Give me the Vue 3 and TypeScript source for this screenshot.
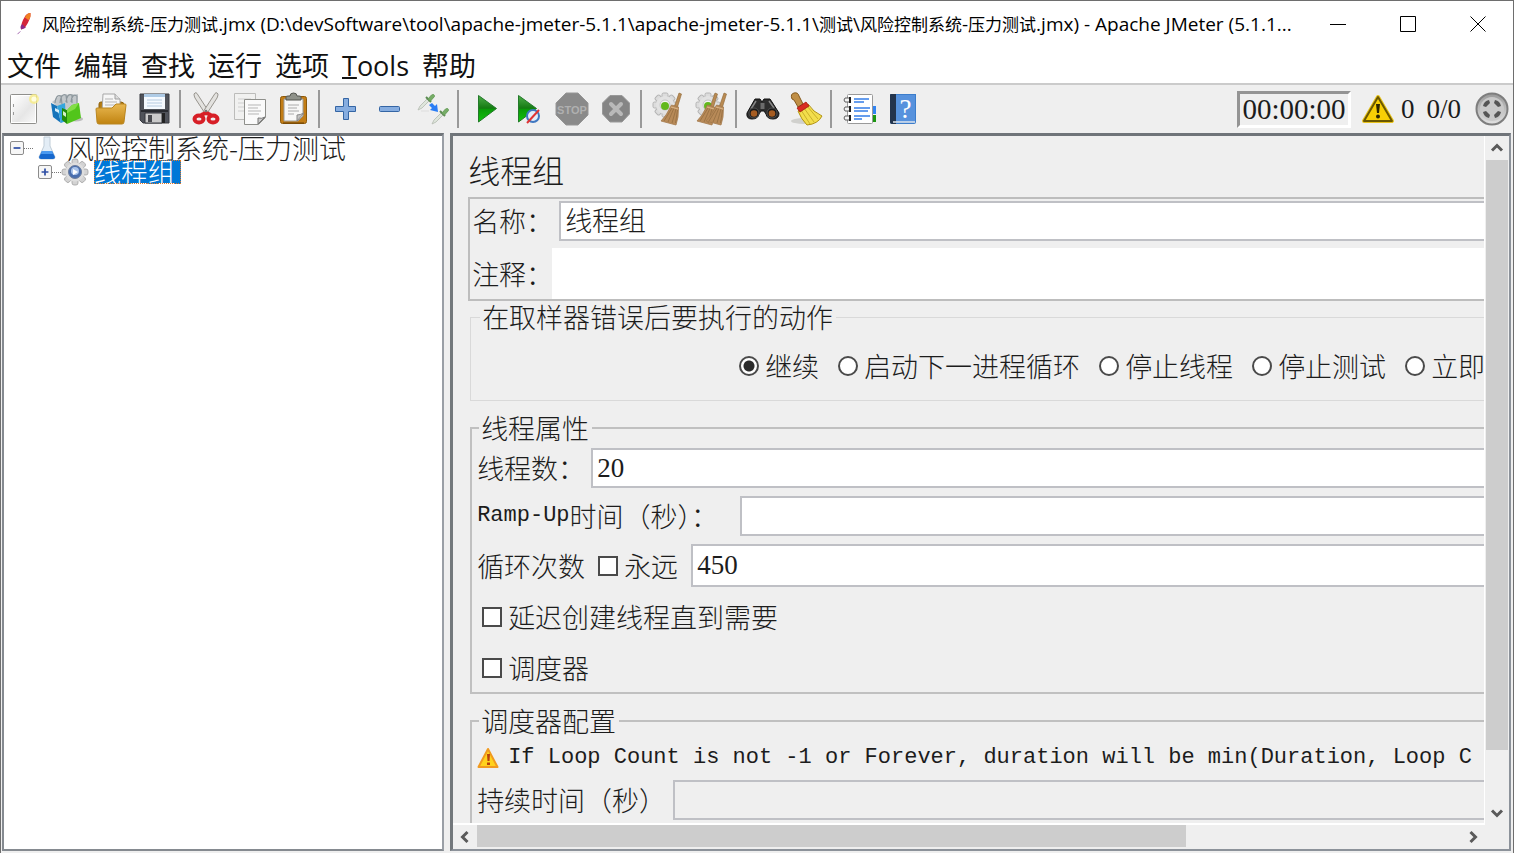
<script setup lang="ts">
import { ref } from 'vue'

interface Tool {
  label: string
  art: string
}

const title =
  '风险控制系统-压力测试.jmx (D:\\devSoftware\\tool\\apache-jmeter-5.1.1\\apache-jmeter-5.1.1\\测试\\风险控制系统-压力测试.jmx) - Apache JMeter (5.1.1...'
const titleRuns = title.split(/([\u4e00-\u9fff]+)/).filter(Boolean)
const isHan = (s: string): boolean => /^[\u4e00-\u9fff]/.test(s)

const menus: string[] = ['文件', '编辑', '查找', '运行', '选项', 'Tools', '帮助']

const gear = (cx: number, cy: number): string => {
  const teeth = [0, 45, 90, 135, 180, 225, 270, 315]
    .map((a) => `<rect x="${cx - 3}" y="${cy - 12}" width="6" height="6" rx="1.5" transform="rotate(${a} ${cx} ${cy})"/>`)
    .join('')
  return `<g fill="#dcdcdc" stroke="#b4b4b4" stroke-width="1">${teeth}</g><circle cx="${cx}" cy="${cy}" r="9" fill="#e2e2e2"/><circle cx="${cx}" cy="${cy}" r="5" fill="#f5f5f5" stroke="#c2c2c2"/><circle cx="${cx}" cy="${cy + 1}" r="4" fill="#62b81c"/>`
}

const whisk = (dx: number): string =>
  `<g transform="translate(${dx} 0)"><path d="M28 0l2.500 1-4 13-3-1z" fill="#b98a52" stroke="#8c6434" stroke-width=".6"/><path d="M20.500 12l7 2-.5 10-2 8-15-4 5-6z" fill="#b88a58" stroke="#a37a4c" stroke-width=".8"/><path d="M21 15l-8 13M23 15l-6 14M25 16l-4 14M26.500 17l-2 13" stroke="#8f6a3e" stroke-width=".7" fill="none"/><path d="M20 14l7 2" stroke="#d9b487" stroke-width="1.200"/></g>`

const pipette = (x: number, y: number): string =>
  `<g transform="translate(${x} ${y})"><path d="M0 16l2-4 7-7 2 2-7 7z" fill="#dfe6dc" stroke="#b9c0b6" stroke-width=".9"/><path d="M8 3l5 5" stroke="#5a8a50" stroke-width="2"/><path d="M10 5l3.500-4q3-1.500 3 1.500L12.500 7z" fill="#76ad66" stroke="#6a9f5c"/></g>`

const green = (id: string): string =>
  `<defs><linearGradient id="${id}" x1="0" y1="0" x2="0" y2="1"><stop offset="0" stop-color="#4fae4a"/><stop offset=".48" stop-color="#157a12"/><stop offset=".52" stop-color="#0a9a08"/><stop offset="1" stop-color="#12c40c"/></linearGradient></defs>`

const groups: Tool[][] = [
  [
    {
      label: '新建',
      art: `<defs><linearGradient id="pg" x1="0" y1="0" x2="1" y2="1"><stop offset="0" stop-color="#fff"/><stop offset=".6" stop-color="#e6e6e6"/><stop offset="1" stop-color="#f8f8f8"/></linearGradient></defs><rect x="3.500" y="1.500" width="26" height="29" rx="1" fill="#fff" stroke="#8f8f8c"/><rect x="5" y="3" width="23" height="26" fill="url(#pg)"/><path d="M6.500 11v3M6.500 19v3" stroke="#999"/><circle cx="27" cy="6" r="5" fill="#f7ec85" opacity=".8"/><circle cx="27" cy="6" r="2.600" fill="#fffde0"/>`,
    },
    {
      label: '模板',
      art: `<ellipse cx="25" cy="26" rx="7" ry="2.500" fill="#bcbcbc"/><path d="M1 9l9-7 17-1-1 12-15 5z" fill="#c3c8cb"/><g fill="none" stroke="#8d979d" stroke-width="1.200"><path d="M4 10q1-9 6-7l1 8M9 10q1-10 6-8l1 8M15 9q1-9 6-7l0 8M20 9q1-9 6-6l0 7"/></g><path d="M0 10l6 3 4 17-8-6z" fill="#1674ba"/><path d="M6 13l8-3 1 18-5 2z" fill="#34a5dd"/><path d="M4 15l4 2v3l-4-2z" fill="#d6edf8"/><path d="M11 15l5 2v14l-5-4z" fill="#228b0a"/><path d="M16 17l5-5 7-2 2 15-14 6z" fill="#52c51b"/><path d="M21 12l7-2-4 6-8 4v-3z" fill="#83de46"/><path d="M12 18l3 2v4l-3-2z" fill="#d5f1c7"/>`,
    },
    {
      label: '打开',
      art: `<defs><linearGradient id="fd" x1="0" y1="0" x2="0" y2="1"><stop offset="0" stop-color="#e9b851"/><stop offset="1" stop-color="#c08310"/></linearGradient></defs><path d="M4 11q0-2 2-2h20q3 0 3 3v14H4z" fill="#b57c12" stroke="#8d600b"/><path d="M8 1h12l5 5v13H7z" fill="#f6f6f6" stroke="#a7a7a7"/><path d="M20 1v5h5" fill="#ddd" stroke="#a0a0a0"/><path d="M10 6h8M10 9h12M10 12h12" stroke="#b5b5b5"/><path d="M1 16q0-1 1-1h15l4-4h9q1 0 1 1l-2 17q0 2-2 2H4q-2 0-2-2z" fill="url(#fd)" stroke="#b98620"/>`,
    },
    {
      label: '保存',
      art: `<path d="M1 1h29v29H4l-3-3z" fill="#50535a" stroke="#383a40"/><rect x="5" y="1" width="21" height="15" fill="#f5faff"/><rect x="5" y="1" width="21" height="3" fill="#aecbe6"/><path d="M8 7h15M8 10h15M8 13h15" stroke="#b6cbe0"/><path d="M2 18h27" stroke="#292b30" stroke-width="2"/><path d="M6 20h17v10H6z" fill="#cacaca" stroke="#33353a"/><rect x="9" y="22" width="4" height="7" fill="#48494e"/><path d="M23 20h3v10h-3z" fill="#222"/>`,
    },
  ],
  [
    {
      label: '剪切',
      art: `<g stroke="#98958f" fill="#e3e2df"><path d="M4 1q2-3 4 1l11 17-3 3L5 5q-1-2-1-4z"/><path d="M28 1q-2-3-4 1L13 19l3 3L27 5q1-2 1-4z"/></g><g fill="none" stroke="#d71f27" stroke-width="4"><ellipse cx="9" cy="26" rx="4.500" ry="3.500"/><ellipse cx="23" cy="26" rx="4.500" ry="3.500"/><path d="M11 22l5-2 5 2"/></g><circle cx="16" cy="18" r="1.300" fill="#777"/>`,
    },
    {
      label: '复制',
      art: `<path d="M.5.500h21v26H.5z" fill="#f1f1f0" stroke="#bcbcba"/><path d="M4 6h13M4 10h12M4 14h8M4 18h8" stroke="#cfcfcf"/><path d="M10.500 6.500h21v18l-7 7h-14z" fill="#fafafa" stroke="#8e8f8b"/><path d="M31 24l-7 7v-6q4 1 7-1z" fill="#ccc" stroke="#777"/><path d="M14 12h13M14 15h10M14 18h13M14 21h11" stroke="#b5b5b5"/>`,
    },
    {
      label: '粘贴',
      art: `<rect x="2.500" y="3.500" width="26" height="27" rx="2" fill="#c27d16" stroke="#8c5809"/><path d="M5 30h21" stroke="#6c4304"/><path d="M6 6h19v17l-5 5H6z" fill="#f7f7f6" stroke="#9b9b98"/><path d="M26 20l-7 8v-6q3 0 7-2z" fill="#c5c5c3" stroke="#888"/><path d="M10 12h11M10 15h9M10 18h11M10 21h6" stroke="#aaa"/><path d="M8 7V4q0-1 2-1h2q0-3 3.500-3T19 3h2q2 0 2 1v3z" fill="#8f928a" stroke="#555751"/>`,
    },
  ],
  [
    {
      label: '全部展开',
      art: `<path d="M14.500 5.500h5v8h7v5h-7v8h-5v-8h-8v-5h8z" fill="#86ade0" stroke="#3465a4" stroke-linejoin="round"/>`,
    },
    {
      label: '全部折叠',
      art: `<rect x="6.500" y="13.500" width="20" height="5" rx="1" fill="#86ade0" stroke="#3465a4"/>`,
    },
    {
      label: '切换',
      art: `${pipette(1, 1)}${pipette(15, 15)}<path d="M12 12l3 3-2 2 8 2-1-8-2 2-3-3z" fill="#2a7df5"/><path d="M4 18h8" stroke="#ddd"/>`,
    },
  ],
  [
    {
      label: '启动',
      art: `${green('ga')}<path d="M10.500 2.500l18 13-18 13.500z" fill="url(#ga)" stroke="#23792a" stroke-linejoin="round"/>`,
    },
    {
      label: '不停顿开始',
      art: `${green('gb')}<path d="M6.500 2.500l18 13-18 13.500z" fill="url(#gb)" stroke="#23792a" stroke-linejoin="round"/><circle cx="21" cy="23" r="6" fill="#e3ecf8" stroke="#3f77c1" stroke-width="2"/><path d="M15 30L27 17" stroke="#e03434" stroke-width="2"/>`,
    },
    {
      label: '停止',
      art: `<path d="M10 0h12l10 10v12L22 32H10L0 22V10z" fill="#8a8a8a" stroke="#969696"/><text x="16" y="21" text-anchor="middle" font-family="Liberation Sans, sans-serif" font-weight="700" font-size="11" fill="#b0b0b0">STOP</text>`,
    },
    {
      label: '关闭',
      art: `<path d="M10 2.500h12l7.500 7.500v11L22 29H10l-7.500-8V10z" fill="#858585" stroke="#999"/><path d="M11 11l10 10M21 11L11 21" stroke="#b9b9b9" stroke-width="4" stroke-linecap="round"/>`,
    },
  ],
  [
    { label: '清除', art: `${gear(14, 12)}${whisk(0)}` },
    { label: '清除全部', art: `${gear(13, 12)}${whisk(-8)}${whisk(1)}` },
  ],
  [
    {
      label: '查找',
      art: `<path d="M9 6h5l2 3 2-3h6l2 3 7 11q0 6-6 6t-7-5l-2-3h-3l-2 3q-1 5-7 5t-5-6z" fill="#2d2d2d" stroke="#111"/><path d="M10 8l-5 8M23 8l5 7" stroke="#888" stroke-width="1.500"/><circle cx="8" cy="20" r="5" fill="#191919" stroke="#505050"/><circle cx="26" cy="20" r="5" fill="#191919" stroke="#505050"/><circle cx="8" cy="20.500" r="3.300" fill="#a75d22"/><circle cx="26" cy="20.500" r="3.300" fill="#a75d22"/><rect x="14.500" y="10" width="4" height="6" fill="#6b6b6b"/>`,
    },
    {
      label: '重置搜索',
      art: `<ellipse cx="14" cy="28" rx="13" ry="3" fill="#d0d0cd"/><path d="M2 6Q0 1 4 0q4-1 5 3l4 8-5 3-4-7z" fill="#c08f46" stroke="#855a1d"/><path d="M18 11q5 8 14 12-4 8-15 9-6-6-9-14z" fill="#f3de4c" stroke="#b29311"/><path d="M11 17l9 14M14 15l10 14M17 13l11 13" stroke="#cbb02a" fill="none"/><path d="M7 15l9-6 3 4-9 6z" fill="#d92b20" stroke="#a3170f" stroke-width=".8"/>`,
    },
  ],
  [
    {
      label: '函数助手',
      art: `<path d="M29 13h6v8h-6z" fill="#3284f2"/><path d="M29 22h6v7h-6z" fill="#1b9610"/><rect x="6.500" y="1.500" width="25" height="29" rx="1" fill="#fff" stroke="#9a9a9a"/><path d="M13 6h15M13 9h10M13 15h16M13 18h14M13 23h16M13 26h8" stroke="#347ee8" stroke-width="1.400"/><g fill="#f3f3f3" stroke="#606060" stroke-width="1"><path d="M9 5H4q-2 2 0 4h5zM9 14H4q-2 2 0 4h5zM9 23H4q-2 2 0 4h5z"/></g><path d="M9 4v6M9 13v6M9 22v6" stroke="#222" stroke-width="2"/>`,
    },
    {
      label: '帮助',
      art: `<path d="M5 2q0-1 1-1h25v28q0 2-2 2H7q-2 0-2-2z" fill="#3c7dcb"/><path d="M5 2q0-1 1-1h5v30H7q-2 0-2-2z" fill="#23344d"/><rect x="11" y="2" width="19" height="27" fill="#5792dd"/><path d="M8 29h22" stroke="#dfe6ee" stroke-width="1.500"/><text x="20.500" y="25" text-anchor="middle" font-family="Liberation Serif, serif" font-size="27" fill="#fff">?</text>`,
    },
  ],
]

const onError = ['继续', '启动下一进程循环', '停止线程', '停止测试', '立即停止测试']
const action = ref('继续')
const name = ref('线程组')
const comment = ref('')
const threads = ref('20')
const ramp = ref('')
const loops = ref('450')
const forever = ref(false)
const delayed = ref(false)
const scheduler = ref(false)
const duration = ref('')
</script>

<template>
  <div class="window">
    <header class="titlebar">
      <svg class="feather" viewBox="0 0 16 26" aria-hidden="true">
        <path d="M15 1Q16 7 9 17L5 19Q4 13 9 5 11 1 15 1z" fill="#d4253a" />
        <path d="M15 1Q16 5 13 9L9 6Q11 1 15 1z" fill="#f08222" />
        <path d="M5 19q-2-3 1-6l4 4z" fill="#8d2a88" />
        <path d="M4 21l-3 3" stroke="#9b5aa8" fill="none" />
      </svg>
      <h1><span v-for="(run, i) in titleRuns" :key="i" :class="{ han: isHan(run) }">{{ run }}</span></h1>
      <div class="controls">
        <button type="button" aria-label="最小化"><svg viewBox="0 0 16 16"><path d="M0 8.500h16" /></svg></button>
        <button type="button" aria-label="最大化"><svg viewBox="0 0 16 16"><path d="M.5.500h15v15H.5z" /></svg></button>
        <button type="button" aria-label="关闭"><svg viewBox="0 0 16 16"><path d="M.5.500l15 15M15.500.500l-15 15" /></svg></button>
      </div>
    </header>

    <nav class="menubar">
      <button v-for="m in menus" :key="m" type="button">
        <span v-if="m === 'Tools'" class="latin-menu"><u>T</u>ools</span>
        <template v-else>{{ m }}</template>
      </button>
    </nav>

    <div class="toolbar">
      <div v-for="(g, i) in groups" :key="i" class="group">
        <button v-for="t in g" :key="t.label" type="button" :aria-label="t.label">
          <svg viewBox="0 0 32 32" aria-hidden="true" v-html="t.art"></svg>
        </button>
      </div>
      <div class="status">
        <output class="timer">00:00:00</output>
        <button type="button" class="warn" aria-label="日志">
          <svg viewBox="0 0 32 28">
            <path d="M16 2L30 26H2z" fill="#f6cc00" stroke="#e8c31c" stroke-width="4" stroke-linejoin="round" />
            <path d="M16 2L30 26H2z" fill="#f8cf05" stroke="#6b5800" stroke-width="2" stroke-linejoin="round" />
            <path d="M14 9h4l-1 9h-2z" fill="#2d2600" />
            <circle cx="16" cy="21.500" r="2" fill="#2d2600" />
          </svg>
        </button>
        <span class="errors">0</span>
        <span>0/0</span>
        <svg class="remote" viewBox="0 0 34 34" aria-hidden="true">
          <defs>
            <linearGradient id="ball" x1="0" y1="0" x2="0" y2="1">
              <stop offset="0" stop-color="#989898" /><stop offset="1" stop-color="#e2e2e2" />
            </linearGradient>
          </defs>
          <circle cx="17" cy="17" r="15.500" fill="url(#ball)" stroke="#7e7e7e" stroke-width="2" />
          <circle cx="17" cy="17" r="12" fill="#c9c9c9" />
          <g fill="#555">
            <path d="M8 14q1-5 6-6l1 3-4 4z" /><path d="M26 14q-1-5-6-6l-1 3 4 4z" />
            <path d="M8 20q1 5 6 6l1-3-4-4z" /><path d="M26 20q-1 5-6 6l-1-3 4-4z" />
          </g>
        </svg>
      </div>
    </div>

    <main class="split">
      <aside class="tree">
        <div class="node">
          <button type="button" class="toggle" aria-label="折叠"><svg viewBox="0 0 14 14"><path d="M3 7h8" /></svg></button>
          <i class="dots"></i>
          <svg class="flask" viewBox="0 0 18 24" aria-hidden="true">
            <path d="M6 1h6v9l5 11q0 2-2 2H3q-2 0-2-2L6 10z" fill="#e3edf6" stroke="#c0cdd8" />
            <path d="M4 15h10l3 6q0 2-2 2H3q-2 0-2-2z" fill="#1768cd" />
            <path d="M4 15h10l1 3H3z" fill="#4b9af0" />
          </svg>
          <span>风险控制系统-压力测试</span>
        </div>
        <div class="node child">
          <button type="button" class="toggle" aria-label="展开"><svg viewBox="0 0 14 14"><path d="M3 7h8M7 3v8" /></svg></button>
          <i class="dots"></i>
          <svg class="cog" viewBox="0 0 28 24" aria-hidden="true">
            <g fill="#d3d3d3" stroke="#a2a2a2" stroke-width=".8">
              <rect v-for="a in [0, 45, 90, 135, 180, 225, 270, 315]" :key="a" x="11" y="-1" width="6" height="7" rx="2" :transform="`rotate(${a} 14 12)`" />
            </g>
            <circle cx="14" cy="12" r="9.500" fill="#dedede" />
            <circle cx="14" cy="12" r="6.500" fill="#4a6fae" stroke="#6e7f9d" />
            <circle cx="14" cy="11" r="4" fill="#aac4ea" />
            <path d="M12 9l5 3-5 3z" fill="#fff" />
          </svg>
          <span class="selected">线程组</span>
        </div>
      </aside>

      <section class="pane">
        <div class="viewport">
          <h2>线程组</h2>
          <div class="naming">
            <div class="row name-row">
              <label for="name">名称：</label>
              <input id="name" v-model="name" class="cjk" type="text" />
            </div>
            <div class="row comment-row">
              <label for="comment">注释：</label>
              <input id="comment" v-model="comment" class="cjk" type="text" />
            </div>
          </div>

          <fieldset class="soft">
            <legend>在取样器错误后要执行的动作</legend>
            <div class="radios">
              <label v-for="o in onError" :key="o"><input v-model="action" type="radio" name="on-error" :value="o" />{{ o }}</label>
            </div>
          </fieldset>

          <fieldset class="props">
            <legend>线程属性</legend>
            <div class="row">
              <label for="threads">线程数：</label>
              <input id="threads" v-model="threads" type="text" />
            </div>
            <div class="row ramp">
              <label for="ramp"><span class="mono">Ramp-Up</span>时间（秒）：</label>
              <input id="ramp" v-model="ramp" type="text" />
            </div>
            <div class="row loop">
              <label for="loops">循环次数</label>
              <label class="check"><input v-model="forever" type="checkbox" />永远</label>
              <input id="loops" v-model="loops" type="text" />
            </div>
            <label class="check line"><input v-model="delayed" type="checkbox" />延迟创建线程直到需要</label>
            <label class="check line"><input v-model="scheduler" type="checkbox" />调度器</label>
          </fieldset>

          <fieldset class="config">
            <legend>调度器配置</legend>
            <p>
              <svg viewBox="0 0 22 22" aria-hidden="true">
                <path d="M11 2l9.500 18h-19z" fill="#ffd21d" stroke="#f19a1f" stroke-width="2" stroke-linejoin="round" />
                <path d="M10 7h3l-.5 7h-2zM10 15.500h3v2.500h-3z" fill="#b8400c" />
              </svg>
              <span class="mono">If Loop Count is not -1 or Forever, duration will be min(Duration, Loop C</span>
            </p>
            <div class="row">
              <label for="duration">持续时间（秒）</label>
              <input id="duration" v-model="duration" type="text" disabled />
            </div>
          </fieldset>
        </div>

        <div class="scroll vertical">
          <button type="button" aria-label="向上"><svg viewBox="0 0 12 12"><path d="M1 8.500l5-5 5 5" /></svg></button>
          <div class="track"><div class="thumb"></div></div>
          <button type="button" aria-label="向下"><svg viewBox="0 0 12 12"><path d="M1 3.500l5 5 5-5" /></svg></button>
        </div>
        <div class="scroll horizontal">
          <button type="button" aria-label="向左"><svg viewBox="0 0 12 12"><path d="M8.500 1l-5 5 5 5" /></svg></button>
          <div class="track"><div class="thumb"></div></div>
          <button type="button" aria-label="向右"><svg viewBox="0 0 12 12"><path d="M3.500 1l5 5-5 5" /></svg></button>
        </div>
      </section>
    </main>
  </div>
</template>

<style>
body {
  margin: 0;
  background: #efefef;
}
</style>

<style scoped>
* {
  box-sizing: border-box;
}
.window {
  display: flex;
  flex-direction: column;
  height: 100vh;
  overflow: hidden;
  border: 1px solid #6e6e6e;
  border-bottom: 0;
  background: #efefef;
  color: #1c1c1c;
  font-family: 'Noto Sans CJK SC', sans-serif;
  font-size: 27px;
  font-weight: 300;
  line-height: 32px;
}
button {
  padding: 0;
  border: 0;
  background: none;
  color: inherit;
  font: inherit;
}
svg {
  display: block;
  flex: none;
  overflow: visible;
}
.titlebar {
  display: flex;
  flex: none;
  align-items: center;
  height: 46px;
  padding-left: 15px;
  background: #fff;
  color: #000;
}
.feather {
  width: 16px;
  height: 24px;
}
h1 {
  flex: 1;
  margin: 0 0 0 10px;
  overflow: hidden;
  font-family: 'Open Sans', 'Noto Sans CJK SC', sans-serif;
  font-size: 19px;
  font-weight: 400;
  line-height: 28px;
  white-space: nowrap;
}
.han {
  font-size: 17px;
}
.controls {
  display: flex;
}
.controls button {
  display: grid;
  place-items: center;
  width: 70px;
  height: 44px;
}
.controls svg {
  width: 16px;
  height: 16px;
  fill: none;
  stroke: #000;
}
.menubar {
  display: flex;
  flex: none;
  gap: 13px;
  height: 38px;
  padding-left: 6px;
  border-bottom: 2px solid #cbcbcb;
  background: #fff;
  color: #111;
  font-weight: 400;
}
.latin-menu {
  font-family: 'Open Sans', sans-serif;
}
.latin-menu u {
  text-decoration-thickness: 2px;
}
.toolbar {
  display: flex;
  flex: none;
  align-items: center;
  height: 48px;
}
.group {
  display: flex;
  align-items: center;
}
.group + .group::before {
  content: '';
  width: 2px;
  height: 38px;
  margin: 0 3px 0 2px;
  background: #999;
}
.group button {
  display: grid;
  place-items: center;
  width: 44px;
  height: 44px;
}
.group svg {
  width: 32px;
  height: 32px;
}
.status {
  display: flex;
  align-items: center;
  margin-left: auto;
  padding-right: 4px;
  font-family: 'Liberation Serif', serif;
}
.timer {
  width: 114px;
  height: 37px;
  border: 3px solid #fff;
  border-top-color: #949494;
  border-left-color: #949494;
  font-size: 29px;
  line-height: 30px;
  text-align: center;
}
.warn {
  margin: 0 7px 0 11px;
}
.warn svg {
  width: 32px;
  height: 28px;
}
.errors {
  margin-right: 12px;
}
.remote {
  width: 34px;
  height: 34px;
  margin-left: 14px;
}
.split {
  display: flex;
  flex: 1;
  gap: 6px;
  min-height: 0;
  padding: 0 2px 2px 1px;
}
.tree {
  flex: none;
  width: 29.300%;
  padding: 0 0 0 6px;
  border: 2px solid #858a90;
  border-top: 3px solid #6f7479;
  border-right: 2px solid #9a9fa6;
  background: #fff;
  line-height: 24px;
}
.node {
  display: flex;
  align-items: center;
  height: 24px;
  white-space: nowrap;
}
.child {
  padding-left: 28px;
}
.toggle {
  flex: none;
  width: 14px;
  height: 14px;
  border: 1px solid #8c8c8c;
  border-radius: 2px;
  background: #f6f6f6;
}
.toggle svg {
  stroke: #2f4fa5;
  stroke-width: 2;
}
.dots {
  width: 9px;
  border-top: 1px dotted #777;
}
.flask {
  width: 18px;
  height: 24px;
  margin: 0 11px 0 5px;
}
.cog {
  width: 28px;
  height: 24px;
  margin-right: 5px;
}
.selected {
  padding-right: 6px;
  outline: 1px dotted #e07a28;
  outline-offset: -1px;
  background: #0078d7;
  color: #fff;
}
.pane {
  display: grid;
  flex: 1;
  grid-template-rows: minmax(0, 1fr) 24px;
  grid-template-columns: minmax(0, 1fr) 24px;
  min-width: 0;
  border: 2px solid #8c929a;
  border-top: 3px solid #6f7479;
  border-left: 3px solid #73787c;
}
.viewport {
  min-width: 0;
  padding: 13px 0 0 15px;
  overflow: hidden;
  border-right: 1px solid #fff;
  border-bottom: 2px solid #fff;
}
h2 {
  margin: 0 0 8px;
  font-size: 32px;
  font-weight: 300;
  line-height: 40px;
}
.row {
  display: flex;
  align-items: center;
  white-space: nowrap;
}
input[type='text'] {
  flex: 1;
  min-width: 0;
  height: 40px;
  padding: 0 4px;
  border: 2px solid #bfc0c5;
  border-right: 0;
  border-radius: 0;
  background: #fff;
  color: #1c1c1c;
  font-family: 'Liberation Serif', serif;
  font-size: 27px;
}
input[type='text']:disabled {
  background: #efefef;
}
input[type='text'].cjk {
  padding-bottom: 3px;
  font-family: 'Noto Sans CJK SC', sans-serif;
  font-weight: 300;
}
.naming {
  height: 104px;
  padding: 2px 0 0 2px;
  border: 2px solid #bdbdbd;
  border-right: 0;
}
.name-row label {
  width: 87px;
}
.comment-row {
  margin-top: 7px;
}
.comment-row label {
  width: 80px;
}
.comment-row input[type='text'] {
  height: 51px;
  border: 0;
}
fieldset {
  min-width: 0;
  margin: 0 0 0 2px;
  padding: 0 0 0 5px;
  border: 2px solid #c0c0c0;
  border-right: 0;
}
legend {
  margin-left: 2px;
  padding: 0 3px 0 2px;
  line-height: 32px;
}
.soft {
  height: 100px;
  border: 1px solid #d9d9d9;
  border-right: 0;
}
.soft legend {
  margin-left: 4px;
}
.radios {
  display: flex;
  gap: 19px;
  padding: 17px 0 0 263px;
  white-space: nowrap;
}
.radios label,
.check {
  display: flex;
  flex: none;
  align-items: center;
  gap: 6px;
}
input[type='radio'],
input[type='checkbox'] {
  flex: none;
  width: 20px;
  height: 20px;
  margin: 0;
  border: 2px solid #4a4a4a;
  background: #fff;
  appearance: none;
}
input[type='radio'] {
  border-radius: 50%;
}
input[type='radio']:checked {
  background: radial-gradient(circle, #2b2b2b 5px, #fff 6px);
}
input[type='checkbox']:checked {
  background: #3c3c3c;
}
.props {
  height: 282px;
  margin-top: 11px;
}
.props .row {
  margin-bottom: 8px;
}
.props .row:first-of-type {
  margin-top: 4px;
}
.props .row:first-of-type label {
  width: 114px;
}
.ramp label {
  display: flex;
  align-items: center;
  width: 263px;
}
.loop label {
  margin-right: 13px;
}
.loop input[type='text'] {
  height: 43px;
}
.line {
  height: 32px;
  margin: 14px 0 19px 5px;
}
.mono {
  font-family: 'Liberation Mono', monospace;
  font-size: 22px;
}
.config {
  height: 180px;
  margin-top: 11px;
}
.config p {
  display: flex;
  align-items: center;
  gap: 9px;
  margin: 5px 0 6px;
  white-space: nowrap;
}
.config p svg {
  width: 22px;
  height: 22px;
}
.config .row label {
  width: 196px;
}
.scroll {
  display: flex;
}
.scroll button {
  display: grid;
  flex: none;
  place-items: center;
  width: 24px;
  height: 24px;
}
.scroll svg {
  width: 12px;
  height: 12px;
  fill: none;
  stroke: #5a5a5a;
  stroke-width: 3;
}
.vertical {
  flex-direction: column;
}
.vertical .thumb {
  width: 22px;
  height: 92%;
  margin-left: 1px;
}
.track {
  flex: 1;
}
.thumb {
  background: #cdcdcd;
}
.horizontal .thumb {
  width: 72%;
  height: 22px;
}
</style>
